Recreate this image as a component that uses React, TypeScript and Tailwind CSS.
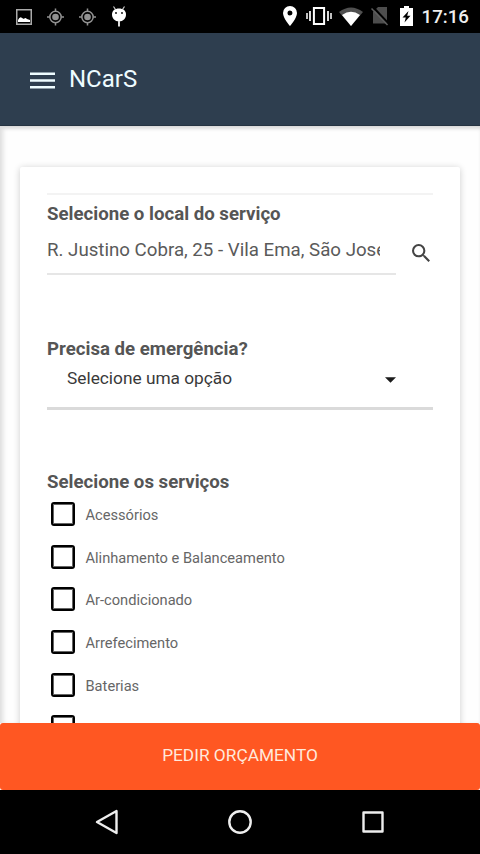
import { useState } from "react";
import clsx from "clsx";

const services = [
    "Acessórios",
    "Alinhamento e Balanceamento",
    "Ar-condicionado",
    "Arrefecimento",
    "Baterias",
    "",
];

export default function App() {
    return (
        <div className="w-[480px] h-[854px] flex flex-col overflow-hidden bg-white font-['Roboto',sans-serif]">
            <StatusBar />
            <Header />
            <main className="h-[597px] overflow-hidden px-5 pt-[41px] bg-[#fefefe] shadow-[inset_5px_0_5px_-2px_#dedede,inset_0_4px_4px_-2px_#cfcfcf]">
                <ServiceForm />
            </main>
            <button className="h-[67px] shrink-0 rounded-[3px] bg-[#ff5722] text-[#ffe9dc] text-[17.3px] leading-none pb-[1px]">
                PEDIR ORÇAMENTO
            </button>
            <NavigationBar />
        </div>
    );
}

function ServiceForm() {
    const [address, setAddress] = useState("R. Justino Cobra, 25 - Vila Ema, São José");
    const [selected, setSelected] = useState<string[]>([]);

    const toggle = (service: string) => {
        setSelected(
            selected.includes(service)
                ? selected.filter((s) => s !== service)
                : [...selected, service]
        );
    };

    return (
        <div className="h-[700px] px-[27px] pt-[26px] bg-white rounded-[2px] shadow-[0_1px_7px_rgba(0,0,0,0.2)]">
            <section className="h-[137px] border-t-2 border-[#f3f3f3]">
                <Title>Selecione o local do serviço</Title>
                <div className="flex">
                    <div className="w-[349px] h-[43px] pr-[16px] border-b-2 border-[#e6e6e6]">
                        <input
                            value={address}
                            onChange={(e) => setAddress(e.target.value)}
                            className="w-full h-[36px] text-[18.7px] text-[#5a5a5a] outline-none"
                        />
                    </div>
                    <svg viewBox="3 3 17.5 17.5" className="w-[18px] h-[18px] ml-4 mt-[12px] fill-[#444]">
                        <path d="M15.5 14h-.79l-.28-.27A6.47 6.47 0 0 0 16 9.5 6.5 6.5 0 1 0 9.5 16c1.61 0 3.09-.59 4.23-1.57l.27.28v.79l5 4.99L20.49 19l-4.99-5zm-6 0a4.5 4.5 0 1 1 0-9 4.5 4.5 0 0 1 0 9z" />
                    </svg>
                </div>
            </section>

            <section className="h-[133px]">
                <Title>Precisa de emergência?</Title>
                <div className="flex justify-between items-start h-[43px] pl-5 pr-[37px] border-b-[3px] border-[#dadada]">
                    <span className="text-[17.3px] leading-6 -mt-[1px] text-[#3a3a3a]">Selecione uma opção</span>
                    <svg viewBox="0 0 12 6" className="w-[11px] h-[6px] mt-[10px] fill-[#1b1b1b]">
                        <path d="M0 0h12L6 6z" />
                    </svg>
                </div>
            </section>

            <section>
                <Title>Selecione os serviços</Title>
                <div className="flex flex-col gap-[18.7px] pl-1 pt-[2px]">
                    {services.map((service) => (
                        <label key={service} className="flex items-center h-6 gap-[11px]">
                            <input
                                type="checkbox"
                                className={clsx(
                                    "appearance-none w-[23.5px] h-6 shrink-0 border-2 border-black rounded-[3px] shadow-[inset_0_0_0_1px_#666]",
                                    selected.includes(service) && "bg-black"
                                )}
                                checked={selected.includes(service)}
                                onChange={() => toggle(service)}
                            />
                            <span className="text-[14.65px] leading-6 pt-[2px] text-[#666]">{service}</span>
                        </label>
                    ))}
                </div>
            </section>
        </div>
    );
}

function Title({ children }: { children: React.ReactNode }) {
    return <h2 className="h-[37px] leading-[39px] text-[18.65px] font-bold text-[#555]">{children}</h2>;
}

function Header() {
    return (
        <header className="h-[93px] shrink-0 flex items-center pl-[30px] pt-[2px] gap-[14px] bg-[#2e3e4f] border-b border-[#263442]">
            <svg viewBox="0 0 25 17" className="w-[25px] h-[17px]" stroke="#eefcff" strokeWidth="2.6">
                <path d="M0 1.8h25M0 8.5h25M0 15.2h25" />
            </svg>
            <h1 className="text-[24px] leading-none text-[#eefcff] pb-[2px]">NCarS</h1>
        </header>
    );
}

function StatusBar() {
    return (
        <div className="h-[33px] shrink-0 flex items-center justify-between pl-4 pr-[11px] bg-black">
            <div className="flex items-center gap-[15px]">
                <svg viewBox="0 0 16 16" className="w-4 h-4">
                    <path d="M.75.75h14.5v14.5H.75z" fill="none" stroke="#aaa" strokeWidth="1.5" />
                    <path d="M2 13V11q2-4 4-2l2 1q1-2 3 0l3 1v2z" fill="#fff" />
                </svg>
                <LocationTarget />
                <LocationTarget />
                <svg viewBox="0 0 16 22" className="w-4 h-[22px]" fill="#fff">
                    <path d="M2.5.5l2 3M13.5.5l-2 3" stroke="#ccc" strokeWidth="1.2" />
                    <path d="M1 8.5C1 4.5 4 2.5 8 2.5s7 2 7 6c0 4-3 7-7 7s-7-3-7-7z" />
                    <path d="M7 15h2v5.5H7z" fill="#ddd" />
                    <circle cx="5" cy="7" r=".9" fill="#000" />
                    <circle cx="11" cy="7" r=".9" fill="#000" />
                </svg>
            </div>
            <div className="flex items-center">
                <svg viewBox="5 2 14 20" className="w-[14px] h-5" fill="#fff">
                    <path d="M12 2a7 7 0 0 0-7 7c0 5.25 7 13 7 13s7-7.75 7-13a7 7 0 0 0-7-7zm0 9.5a2.5 2.5 0 1 1 0-5 2.5 2.5 0 0 1 0 5z" />
                </svg>
                <svg viewBox="0 0 26 18" className="w-[26px] h-[18px] ml-[9px] mr-[1px]" fill="none" stroke="#fff">
                    <path d="M7.9 1h10.2v16H7.9z" strokeWidth="2" />
                    <path d="M4 4v10M22 4v10" strokeWidth="1.7" />
                    <path d="M1 6v6M25 6v6" strokeWidth="1.5" />
                </svg>
                <svg viewBox="0 0 24 19" className="w-6 h-[19px] ml-[6px]">
                    <path d="M0 5Q12-4 24 5L12 19z" fill="#505050" />
                    <path d="M3 8Q12 1.5 21 8L12 19z" fill="#fff" />
                </svg>
                <svg viewBox="0 0 18 20" className="w-[18px] h-5 ml-[8px]">
                    <path d="M7 1h9v16.5H2V6z" fill="#4d4d4d" />
                    <path d="M2 1l16 17" stroke="#000" strokeWidth="2" />
                    <path d="M.5 2.5l16 16.5" stroke="#5e5e5e" strokeWidth="1.5" />
                </svg>
                <svg viewBox="0 0 13 20" className="w-[13px] h-5 ml-[11px]">
                    <path d="M4 0h5v2h4v18H0V2h4z" fill="#fff" />
                    <path d="M8.5 5L2.5 11.5h3.3L4.5 16.5l6-6.8H7.2z" fill="#000" />
                </svg>
                <span className="ml-[9px] text-[18.7px] leading-none font-medium text-[#eee] pt-[2px]">17:16</span>
            </div>
        </div>
    );
}

function LocationTarget() {
    return (
        <svg viewBox="0 0 18 18" className="w-[17px] h-[18px]" fill="none" stroke="#929292">
            <circle cx="9" cy="9" r="6" strokeWidth="1.6" />
            <circle cx="9" cy="9" r="3.5" fill="#929292" stroke="none" />
            <path d="M9 0v3M9 15v3M0 9h3M15 9h3" strokeWidth="1.6" />
        </svg>
    );
}

function NavigationBar() {
    return (
        <nav className="h-16 shrink-0 flex items-center justify-between px-[95px] bg-black">
            <svg viewBox="0 0 24 26" className="w-6 h-[26px]" fill="none" stroke="#eee" strokeWidth="2.4" strokeLinejoin="round">
                <path d="M21.5 2v22L2 13z" />
            </svg>
            <svg viewBox="0 0 26 26" className="w-[26px] h-[26px]" fill="none" stroke="#eee" strokeWidth="2.4">
                <circle cx="13" cy="13" r="10.7" />
            </svg>
            <svg viewBox="0 0 24 24" className="w-6 h-6" fill="none" stroke="#eee" strokeWidth="2.4" strokeLinejoin="round">
                <path d="M2.5 2.5h19v19h-19z" />
            </svg>
        </nav>
    );
}
